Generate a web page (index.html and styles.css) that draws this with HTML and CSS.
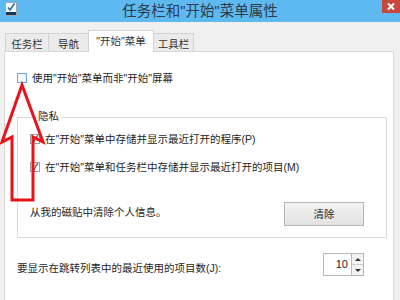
FILE: index.html
```html
<!DOCTYPE html>
<html lang="zh-CN">
<head>
<meta charset="utf-8">
<title>任务栏和“开始”菜单属性</title>
<link rel="stylesheet" href="styles.css">
</head>
<body>
<div class="window">
  <div class="titlebar">
    <svg class="app-icon" width="12" height="14" viewBox="0 0 12 14">
      <rect x="0.5" y="0.5" width="11" height="13" fill="#f7f9fb" stroke="#9aa7b4"/>
      <path d="M3 5.5 L5 8 L9.5 1.5" fill="none" stroke="#2b6fb8" stroke-width="1.6"/>
      <rect x="1" y="10" width="10" height="3" fill="#1d3557"/>
    </svg>
    <div class="title">任务栏和"开始"菜单属性</div>
    <div class="close">
      <svg width="18" height="13" viewBox="0 0 18 13">
        <path d="M6 3.5 L12 9.5 M12 3.5 L6 9.5" stroke="#fff" stroke-width="2"/>
      </svg>
    </div>
  </div>

  <div class="tabs">
    <div class="tab t1">任务栏</div>
    <div class="tab t2">导航</div>
    <div class="tab tab-active">"开始"菜单</div>
    <div class="tab t4">工具栏</div>
  </div>

  <div class="panel">
    <div class="check-row">
      <span class="box box-hover"></span>
      <span class="label">使用"开始"菜单而非"开始"屏幕</span>
    </div>

    <div class="group">
      <span class="group-title">隐私</span>
      <div class="check-row first">
        <span class="box box-checked">✓</span>
        <span class="label">在"开始"菜单中存储并显示最近打开的程序(P)</span>
      </div>
      <div class="check-row second">
        <span class="box box-checked">✓</span>
        <span class="label">在"开始"菜单和任务栏中存储并显示最近打开的项目(M)</span>
      </div>
      <div class="clear-row">
        <span class="label">从我的磁贴中清除个人信息。</span>
        <div class="button">清除</div>
      </div>
    </div>

    <div class="count-row">
      <span class="label count-label">要显示在跳转列表中的最近使用的项目数(J):</span>
      <div class="spinner">
        <div class="spin-value">10</div>
        <div class="spin-arrows">
          <span class="arrow-up"></span>
          <span class="arrow-down"></span>
        </div>
      </div>
    </div>
  </div>

  <svg class="red-arrow" width="400" height="300" viewBox="0 0 400 300">
    <polygon points="22,85 43,142 33,137 33,200 12,200 12,137 2,142" fill="none" stroke="#e8131b" stroke-width="3" stroke-linejoin="miter"/>
  </svg>
</div>
</body>
</html>
```

FILE: styles.css
```css
html, body {
  margin: 0;
  padding: 0;
}

body {
  width: 400px;
  height: 300px;
  overflow: hidden;
  background: #f0f0f0;
  font-family: "Liberation Sans", "Noto Sans CJK SC", sans-serif;
  color: #222;
}

.window {
  position: relative;
  width: 400px;
  height: 300px;
}

.titlebar {
  height: 22px;
  background: #5db9f0;
  display: grid;
  grid-template-columns: 1fr auto 1fr;
  align-items: start;
}

.app-icon {
  margin: 2px 0 0 5px;
}

.title {
  font-size: 14.5px;
  line-height: 22px;
  color: #2d3b48;
}

.close {
  justify-self: end;
  width: 18px;
  height: 13px;
  background: #c9473d;
  display: flex;
}

.tabs {
  display: flex;
  align-items: flex-end;
  margin-top: 8px;
  padding-left: 5px;
  height: 21px;
}

.tab {
  box-sizing: border-box;
  height: 18px;
  border: 1px solid #d3d3d3;
  border-bottom: none;
  background: #ebebeb;
  font-size: 10.5px;
  line-height: 14px;
  padding-top: 3px;
  text-align: center;
  color: #333;
}

.t1 { width: 44px; }
.t2 { width: 41px; margin-left: -1px; }
.t4 { width: 41px; margin-left: -1px; }

.tab-active {
  position: relative;
  z-index: 1;
  width: 66px;
  height: 22px;
  margin-left: -1px;
  margin-bottom: -1px;
  background: #fff;
  padding-top: 3px;
}

.panel {
  box-sizing: border-box;
  margin-left: 4px;
  width: 390px;
  height: 260px;
  background: #fff;
  border: 1px solid #d9d9d9;
  padding: 19px 7px 0 12px;
  display: flex;
  flex-direction: column;
  align-items: flex-start;
}

.label {
  font-size: 10.5px;
  line-height: 14px;
  color: #262626;
  white-space: nowrap;
}

.check-row {
  display: flex;
  align-items: center;
  gap: 5px;
  height: 14px;
}

.box {
  box-sizing: border-box;
  width: 10px;
  height: 10px;
  border: 1px solid #9a9a9a;
  background: #fff;
  font-size: 9px;
  line-height: 8px;
  text-align: center;
  color: #333;
  font-weight: bold;
}

.box-hover {
  border-color: #6aa6dc;
  background: #f4f9fe;
}

.box-checked {
  border-color: #a0a0a0;
}

.group {
  box-sizing: border-box;
  margin-top: 32px;
  width: 370px;
  border: 1px solid #dcdcdc;
  padding: 0 22px 11px 12px;
  display: flex;
  flex-direction: column;
  align-items: flex-start;
}

.group-title {
  margin: -9px 0 0 6px;
  padding: 0 2px;
  background: #fff;
  font-size: 10.5px;
  line-height: 14px;
  color: #262626;
}

.check-row.first {
  margin-top: 9px;
}

.check-row.second {
  margin-top: 14px;
}

.clear-row {
  margin-top: 28px;
  align-self: stretch;
  display: flex;
  justify-content: space-between;
  align-items: center;
}

.clear-row .label {
  margin-bottom: 4px;
}

.button {
  box-sizing: border-box;
  width: 80px;
  height: 24px;
  border: 1px solid #b4b4b4;
  background: linear-gradient(#f2f2f2, #e3e3e3);
  font-size: 10.5px;
  line-height: 22px;
  text-align: center;
  color: #262626;
}

.count-row {
  margin-top: 15px;
  width: 370px;
  display: flex;
  justify-content: space-between;
  align-items: flex-start;
}

.count-label {
  margin-top: 8px;
}

.spinner {
  display: flex;
  margin-right: 23px;
  height: 23px;
}

.spin-value {
  box-sizing: border-box;
  width: 28px;
  height: 23px;
  border: 1px solid #b9b9b9;
  border-right: none;
  font-size: 11px;
  line-height: 21px;
  text-align: right;
  padding-right: 3px;
  color: #222;
}

.spin-arrows {
  box-sizing: border-box;
  width: 13px;
  height: 23px;
  border: 1px solid #b9b9b9;
  display: flex;
  flex-direction: column;
  background: #f3f3f3;
}

.arrow-up,
.arrow-down {
  flex: 1;
  display: flex;
  align-items: center;
  justify-content: center;
}

.arrow-up {
  border-bottom: 1px solid #cfcfcf;
}

.arrow-up::before {
  content: "";
  border-left: 3px solid transparent;
  border-right: 3px solid transparent;
  border-bottom: 3px solid #333;
}

.arrow-down::before {
  content: "";
  border-left: 3px solid transparent;
  border-right: 3px solid transparent;
  border-top: 3px solid #333;
}

.red-arrow {
  position: absolute;
  left: 0;
  top: 0;
  pointer-events: none;
}
```
